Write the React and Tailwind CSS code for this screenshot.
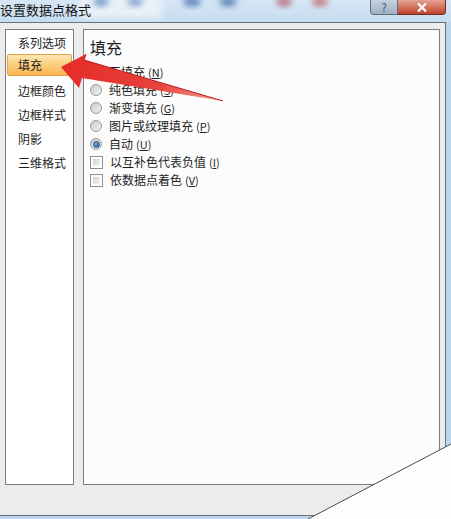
import React from 'react'

const font = { fontFamily: '"Noto Sans CJK SC", "Microsoft YaHei", sans-serif' }

function Key({ k }) {
  return (
    <span className="ml-[3px] text-[11px]">
      (<span className="underline">{k}</span>)
    </span>
  )
}

function Radio({ checked }) {
  return (
    <span className="w-[12px] h-[12px] rounded-full border border-[#9a9a9a] bg-gradient-to-br from-[#c9c9c9] to-[#f4f4f4] flex items-center justify-center shrink-0">
      {checked && (
        <span className="w-[7px] h-[7px] rounded-full bg-gradient-to-br from-[#8fc2ea] to-[#1c5a96] border border-[#1f4e7c]" />
      )}
    </span>
  )
}

function Check() {
  return (
    <span className="w-[13px] h-[13px] border border-[#8e8f8f] bg-white p-[2px] shrink-0 flex">
      <span className="flex-1 bg-gradient-to-br from-[#d2d2d2] to-[#f6f6f6]" />
    </span>
  )
}

const options = [
  { type: 'radio', label: '无填充', k: 'N' },
  { type: 'radio', label: '纯色填充', k: 'S' },
  { type: 'radio', label: '渐变填充', k: 'G' },
  { type: 'radio', label: '图片或纹理填充', k: 'P' },
  { type: 'radio', label: '自动', k: 'U', checked: true },
  { type: 'check', label: '以互补色代表负值', k: 'I' },
  { type: 'check', label: '依数据点着色', k: 'V' },
]

const menu = ['边框颜色', '边框样式', '阴影', '三维格式']

export default function App() {
  return (
    <div className="relative w-[451px] h-[519px] overflow-hidden bg-[#bcd6ef] text-[#1e1e1e]" style={font}>
      {/* title bar */}
      <div className="relative h-[22px] bg-gradient-to-b from-[#d6e6f5] to-[#c7dcf0] flex items-start overflow-hidden">
        <svg className="absolute left-0 top-0" width="451" height="22">
          <defs>
            <filter id="bl" x="-50%" y="-50%" width="200%" height="200%">
              <feGaussianBlur stdDeviation="3" />
            </filter>
          </defs>
          <rect x="80" y="-4" width="82" height="22" rx="4" fill="#e9f1f8" filter="url(#bl)" />
          <ellipse cx="101" cy="2" rx="8" ry="4" fill="#6f95c2" filter="url(#bl)" />
          <ellipse cx="135" cy="2" rx="8" ry="4" fill="#7b9fc9" filter="url(#bl)" />
          <ellipse cx="192" cy="2" rx="9" ry="4" fill="#4f7bb4" filter="url(#bl)" />
          <ellipse cx="228" cy="2" rx="9" ry="4" fill="#4f7bb4" filter="url(#bl)" />
          <ellipse cx="284" cy="2" rx="8" ry="4" fill="#b56a78" filter="url(#bl)" />
          <ellipse cx="320" cy="2" rx="8" ry="4" fill="#bf6f78" filter="url(#bl)" />
        </svg>
        <span className="relative mt-[2px] text-[13px] leading-[16px] text-[#111]">设置数据点格式</span>
        <div className="relative ml-auto mr-[5px] flex">
          <div className="w-[28px] h-[15px] rounded-bl-[4px] border border-t-0 border-[#5d6d7e] bg-gradient-to-b from-[#c6d3df] to-[#9fb2c4] flex items-center justify-center text-[11px] leading-none text-[#3d4a57]">?</div>
          <div className="w-[48px] h-[15px] rounded-br-[4px] border border-t-0 border-l-0 border-[#6d2a22] bg-gradient-to-b from-[#e4a38f] to-[#c0402c] flex items-center justify-center">
            <svg width="10" height="9" viewBox="0 0 10 9">
              <path d="M1 0.5 L9 8.5 M9 0.5 L1 8.5" stroke="#fff" strokeWidth="2.2" />
            </svg>
          </div>
        </div>
      </div>

      {/* dialog body */}
      <div className="w-[446px] h-[494px] border-t border-r border-b border-[#66737f] bg-[#ececec] flex gap-[9px] pl-[5px] pr-[5px] pt-[6px] pb-[30px]">
        <div className="w-[69px] border border-[#7d7d7d] bg-white flex flex-col text-[12px] pt-[2px]">
          <div className="h-[22px] flex items-center pl-[12px]">系列选项</div>
          <div className="h-[22px] mx-[1px] flex items-center pl-[10px] rounded-[2px] border border-[#e0a444] bg-gradient-to-b from-[#fde7b4] via-[#fbcd7c] to-[#f8b54d]">填充</div>
          <div className="mt-[3px] flex flex-col">
            {menu.map(m => (
              <div key={m} className="h-[24px] flex items-center pl-[12px]">{m}</div>
            ))}
          </div>
        </div>
        <div className="flex-1 border border-[#7d7d7d] bg-[#fcfcfc] pl-[6px] pt-[7px]">
          <div className="text-[16px] leading-[20px]">填充</div>
          <div className="mt-[6px] flex flex-col text-[12px]">
            {options.map(o => (
              <div key={o.label} className="h-[18px] flex items-center gap-[7px]">
                {o.type === 'radio' ? <Radio checked={o.checked} /> : <Check />}
                <span className="leading-none">
                  {o.label}
                  <Key k={o.k} />
                </span>
              </div>
            ))}
          </div>
        </div>
      </div>

      {/* red arrow annotation and page curl */}
      <svg className="absolute left-0 top-0 pointer-events-none" width="451" height="519">
        <defs>
          <linearGradient id="ar" x1="60" y1="67" x2="223" y2="101" gradientUnits="userSpaceOnUse">
            <stop offset="0" stopColor="#e52b27" />
            <stop offset="0.6" stopColor="#e8423b" />
            <stop offset="1" stopColor="#f1a49a" />
          </linearGradient>
        </defs>
        <polygon points="61,67 86,54 84,60 223,101 82,78 79,88" fill="url(#ar)" />
        <polyline points="86,54 84,60 223,101" fill="none" stroke="#b71c1c" strokeWidth="1" />
        <polygon points="308,519 451,444 451,519" fill="#fdfdfd" />
        <line x1="308" y1="519" x2="451" y2="444" stroke="#4a4a4a" strokeWidth="1" />
      </svg>
    </div>
  )
}
